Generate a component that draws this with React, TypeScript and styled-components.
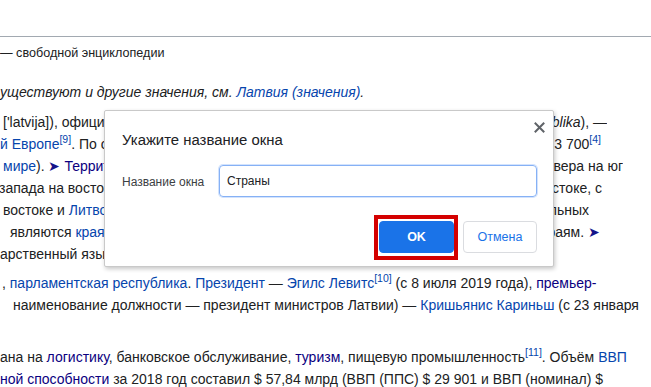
import React from "react";
import styled, { createGlobalStyle } from "styled-components";

const GlobalStyle = createGlobalStyle`
  html, body { margin: 0; padding: 0; background: #ffffff; overflow: hidden; }
  body { font-family: "Liberation Sans", Arial, sans-serif; color: #202122; }
`;

const Page = styled.div`
  position: relative;
  width: 651px;
  height: 387px;
  overflow: hidden;
  background: #fff;
`;

const Header = styled.div`
  height: 36px;
  border-bottom: 1px solid #a2a9b1;
`;

const SiteSub = styled.div`
  margin-top: 6px;
  font-size: 12.6px;
  line-height: 20px;
  white-space: nowrap;
  color: #202122;
`;

const Hatnote = styled.div<{ $indent: number }>`
  margin-top: 18px;
  padding-left: ${(p) => p.$indent}px;
  font-size: 14px;
  line-height: 22px;
  font-style: italic;
  white-space: nowrap;
`;

const Para = styled.div<{ $mt: number }>`
  margin-top: ${(p) => p.$mt}px;
  font-size: 14px;
`;

const Line = styled.div`
  display: flex;
  justify-content: space-between;
  height: 22px;
  line-height: 22px;
  white-space: nowrap;
`;

const Left = styled.span<{ $indent: number }>`
  flex: 0 0 auto;
  margin-left: ${(p) => p.$indent}px;
`;

/* fragment of a line whose middle lies under the dialog: clipped at the dialog's left edge */
const LeftCut = styled.span<{ $indent: number }>`
  flex: 0 0 auto;
  box-sizing: border-box;
  width: 104px;
  overflow: hidden;
  padding-left: ${(p) => Math.max(p.$indent, 0)}px;
  text-indent: ${(p) => Math.min(p.$indent, 0)}px;
`;

/* fragment to the right of the dialog, clipped at the dialog's right edge */
const RightCut = styled.span<{ $pr: number }>`
  flex: 0 0 auto;
  box-sizing: border-box;
  width: ${(p) => 651 - 553 - p.$pr}px;
  margin-right: ${(p) => p.$pr}px;
  overflow: hidden;
  direction: rtl;
  text-align: right;
`;

const Ltr = styled.span`
  direction: ltr;
  unicode-bidi: isolate;
`;

const A = styled.span<{ $visited?: boolean }>`
  color: ${(p) => (p.$visited ? "#0b0080" : "#0645ad")};
`;

const Sup = styled.sup`
  font-size: 10.5px;
  line-height: 1;
  vertical-align: 6px;
  color: #0645ad;
`;

const Arrow = styled.span`
  color: #14148a;
`;

const Overlay = styled.div`
  position: absolute;
  left: 104px;
  top: 110px;
  width: 448px;
  background: #fff;
  border: 1px solid #c9c9c9;
  border-radius: 2px;
  box-shadow: 1px 2px 4px rgba(0, 0, 0, 0.22);
  font-family: "Liberation Sans", Arial, sans-serif;
  display: flex;
  flex-direction: column;
`;

const DialogHeader = styled.div`
  display: flex;
  justify-content: space-between;
  align-items: flex-start;
  padding: 0 7px 0 17px;
`;

const Title = styled.div`
  margin-top: 20px;
  font-size: 14.9px;
  line-height: 18px;
  color: #202124;
`;

const Close = styled.button`
  margin-top: 9px;
  width: 14px;
  height: 14px;
  padding: 0;
  border: 0;
  background: transparent;
  display: flex;
  align-items: center;
  justify-content: center;
`;

const Field = styled.div`
  display: flex;
  align-items: center;
  margin-top: 16px;
  padding: 0 16px 0 17px;
`;

const Label = styled.label`
  width: 97px;
  font-size: 12px;
  color: #3c4043;
  padding-top: 2px;
`;

const Input = styled.div`
  box-sizing: border-box;
  width: 318px;
  height: 32px;
  border: 1px solid #86b1f5;
  box-shadow: 0 0 0 1px #d3e3fd;
  border-radius: 4px;
  padding: 0 7px;
  display: flex;
  align-items: center;
  font-size: 12px;
  color: #202124;
`;

const Buttons = styled.div`
  display: flex;
  justify-content: flex-end;
  gap: 9px;
  margin-top: 24px;
  padding: 0 16px 13px 0;
`;

const Button = styled.button<{ $primary?: boolean; $width: number }>`
  position: relative;
  box-sizing: border-box;
  width: ${(p) => p.$width}px;
  height: 32px;
  border-radius: 4px;
  font-family: "Liberation Sans", Arial, sans-serif;
  font-size: 12.5px;
  font-weight: ${(p) => (p.$primary ? 700 : 400)};
  color: ${(p) => (p.$primary ? "#ffffff" : "#1a73e8")};
  background: ${(p) => (p.$primary ? "#1a73e8" : "#ffffff")};
  border: 1px solid ${(p) => (p.$primary ? "#1a73e8" : "#dadce0")};
  padding: 0;
`;

const FocusMark = styled.span`
  position: absolute;
  left: -6px;
  right: -5px;
  top: -7px;
  bottom: -8px;
  border: 4px solid #d40000;
  pointer-events: none;
`;

export default function App() {
  return (
    <Page>
      <GlobalStyle />
      <Header />
      <SiteSub>— свободной энциклопедии</SiteSub>
      <Hatnote $indent={-2}>
        уществуют и другие значения, см. <A>Латвия (значения)</A>.
      </Hatnote>
      <Para $mt={8}>
        <Line>
          <LeftCut $indent={3}>['latvija]), офици</LeftCut>
          <RightCut $pr={44}>
            <Ltr>
              <i>blika</i>), —
            </Ltr>
          </RightCut>
        </Line>
        <Line>
          <LeftCut $indent={0}>
            <A>й Европе</A>
            <Sup>[9]</Sup>. По о
          </LeftCut>
          <RightCut $pr={50}>
            <Ltr>
              3 700<Sup>[4]</Sup>
            </Ltr>
          </RightCut>
        </Line>
        <Line>
          <LeftCut $indent={3}>
            <A>мире</A>). <Arrow>➤</Arrow> <A $visited>Террит</A>
          </LeftCut>
          <RightCut $pr={28}>
            <Ltr>вера на юг</Ltr>
          </RightCut>
        </Line>
        <Line>
          <LeftCut $indent={-1}>запада на восток</LeftCut>
          <RightCut $pr={49}>
            <Ltr>стоке, с</Ltr>
          </RightCut>
        </Line>
        <Line>
          <LeftCut $indent={3}>
            востоке и <A>Литво</A>
          </LeftCut>
          <RightCut $pr={62}>
            <Ltr>льных</Ltr>
          </RightCut>
        </Line>
        <Line>
          <LeftCut $indent={10}>
            являются <A>краям</A>
          </LeftCut>
          <RightCut $pr={51}>
            <Ltr>
              раям. <Arrow>➤</Arrow>
            </Ltr>
          </RightCut>
        </Line>
        <Line>
          <LeftCut $indent={0}>арственный язы</LeftCut>
        </Line>
      </Para>
      <Para $mt={7}>
        <Line>
          <Left $indent={2}>
            , <A>парламентская республика</A>. <A>Президент</A> — <A>Эгилс Левитс</A>
            <Sup>[10]</Sup> (с 8 июля 2019 года), <A $visited>премьер-</A>
          </Left>
        </Line>
        <Line>
          <Left $indent={13}>
            наименование должности — президент министров Латвии) — <A>Кришьянис Кариньш</A> (с 23 января
          </Left>
        </Line>
        <Line />
      </Para>
      <Para $mt={8}>
        <Line>
          <Left $indent={0}>
            ана на <A $visited>логистику</A>, банковское обслуживание, <A $visited>туризм</A>, пищевую
            промышленность<Sup>[11]</Sup>. Объём <A>ВВП</A>
          </Left>
        </Line>
        <Line>
          <Left $indent={0}>
            <A $visited>ной способности</A> за 2018 год составил $ 57,84 млрд (ВВП (ППС) $ 29 901 и ВВП (номинал) $
          </Left>
        </Line>
      </Para>

      <Overlay role="dialog">
        <DialogHeader>
          <Title>Укажите название окна</Title>
          <Close aria-label="Закрыть">
            <svg width="11" height="11" viewBox="0 0 11 11">
              <path d="M1.5 1.5 L9.5 9.5 M9.5 1.5 L1.5 9.5" stroke="#5f6368" strokeWidth="2" strokeLinecap="square" fill="none" />
            </svg>
          </Close>
        </DialogHeader>
        <Field>
          <Label>Название окна</Label>
          <Input>Страны</Input>
        </Field>
        <Buttons>
          <Button $primary $width={75}>
            OK
            <FocusMark />
          </Button>
          <Button $width={74}>Отмена</Button>
        </Buttons>
      </Overlay>
    </Page>
  );
}
